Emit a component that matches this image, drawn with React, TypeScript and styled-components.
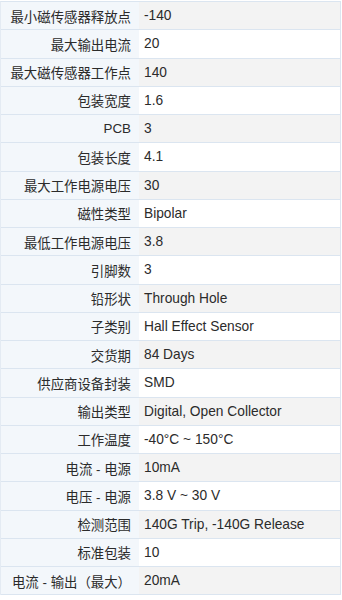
import React from 'react'
import styled, { createGlobalStyle } from 'styled-components'

const GlobalStyle = createGlobalStyle`
  body {
    margin: 0;
    padding-top: 1px;
    background: #fff;
    font-family: "Liberation Sans", Arial, "Noto Sans CJK SC", sans-serif;
    color: #2b2b2b;
  }
`

const SpecTable = styled.div`
  width: 341px;
  box-sizing: border-box;
  border-top: 1px solid #dbe5f0;
  border-left: 1px solid #e4ebf3;
  border-right: 1px solid #dbe5f0;
`

const SpecRow = styled.div<{ $striped: boolean }>`
  display: grid;
  grid-template-columns: 138px 1fr;
  height: 28.25px;
  box-sizing: border-box;
  border-bottom: 1px solid #dbe5f0;
  background: ${p => (p.$striped ? '#f3f3f3' : '#fff')};
`

const Label = styled.div`
  background: #f3f7fb;
  font-size: 13.4px;
  padding-right: 8px;
  display: flex;
  align-items: center;
  justify-content: flex-end;
  white-space: nowrap;
`

const Value = styled.div`
  font-size: 13.75px;
  padding-left: 5px;
  display: flex;
  align-items: center;
  white-space: nowrap;
`

const specs: [string, string][] = [
  ['最小磁传感器释放点', '-140'],
  ['最大输出电流', '20'],
  ['最大磁传感器工作点', '140'],
  ['包装宽度', '1.6'],
  ['PCB', '3'],
  ['包装长度', '4.1'],
  ['最大工作电源电压', '30'],
  ['磁性类型', 'Bipolar'],
  ['最低工作电源电压', '3.8'],
  ['引脚数', '3'],
  ['铅形状', 'Through Hole'],
  ['子类别', 'Hall Effect Sensor'],
  ['交货期', '84 Days'],
  ['供应商设备封装', 'SMD'],
  ['输出类型', 'Digital, Open Collector'],
  ['工作温度', '-40°C ~ 150°C'],
  ['电流 - 电源', '10mA'],
  ['电压 - 电源', '3.8 V ~ 30 V'],
  ['检测范围', '140G Trip, -140G Release'],
  ['标准包装', '10'],
  ['电流 - 输出（最大）', '20mA'],
]

export default function App() {
  return (
    <>
      <GlobalStyle />
      <SpecTable>
        {specs.map(([label, value], i) => (
          <SpecRow key={label} $striped={i % 2 === 0}>
            <Label>{label}</Label>
            <Value>{value}</Value>
          </SpecRow>
        ))}
      </SpecTable>
    </>
  )
}
